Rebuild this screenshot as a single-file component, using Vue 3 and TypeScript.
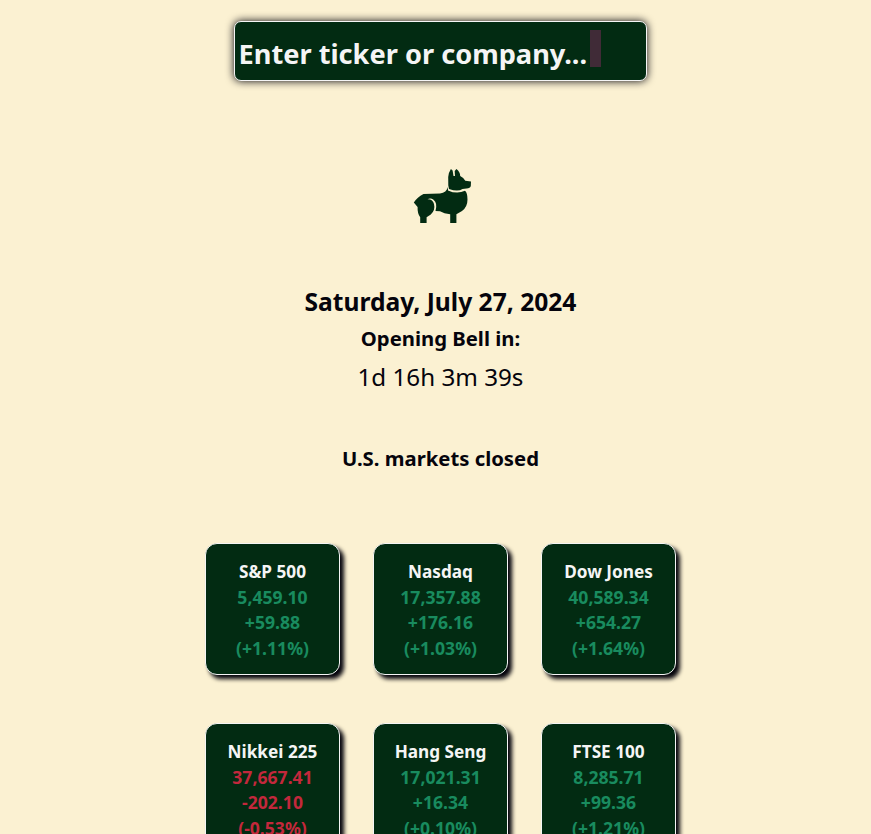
<script setup lang="ts">
interface MarketIndex {
  name: string
  price: string
  change: string
  percent: string
}

const indices: MarketIndex[] = [
  { name: 'S&P 500', price: '5,459.10', change: '+59.88', percent: '(+1.11%)' },
  { name: 'Nasdaq', price: '17,357.88', change: '+176.16', percent: '(+1.03%)' },
  { name: 'Dow Jones', price: '40,589.34', change: '+654.27', percent: '(+1.64%)' },
  { name: 'Nikkei 225', price: '37,667.41', change: '-202.10', percent: '(-0.53%)' },
  { name: 'Hang Seng', price: '17,021.31', change: '+16.34', percent: '(+0.10%)' },
  { name: 'FTSE 100', price: '8,285.71', change: '+99.36', percent: '(+1.21%)' },
]
</script>

<template>
  <main class="page">
    <div class="search">
      <span class="prompt">Enter ticker or company...</span><span class="caret"></span>
    </div>

    <svg class="logo" viewBox="0 0 60 58" aria-hidden="true">
      <path d="M35.3 17.5 L35.2 9 Q35.8 4 37.9 1 L39.6 2.5 L40.5 8 L42 8 L41.7 3 L43.4 1 Q47.2 4 47.2 8 Q50.6 9.4 52.3 12.8 L58 13.4 L57.8 18 Q57.3 20.4 53.5 20.6 L49.5 21 Q45 24 36 21 Z" />
      <path d="M35 19 L35 22.4 Q44 26.6 52 22.8 Q54.5 25 54.5 31.5 Q54.5 39 49 43 L43.4 46.3 L43.4 55 L37.2 55 L37.2 46.3 Q31 45.6 27 43.2 L22.5 43 Q24.8 35 20.5 31.7 Q17.6 29.7 14.5 31.3 Q19.8 31 21 36 Q22.5 42 17.8 46.5 L13.6 49.3 L13.6 55 L7.2 55 L7.2 49.3 Q4.3 45.5 4.6 39 L0.8 34.5 Q4 29.5 10.5 26 L27 25.6 Q33.6 24.5 35 19 Z" />
    </svg>

    <section class="status">
      <h1 class="date">Saturday, July 27, 2024</h1>
      <h2 class="label">Opening Bell in:</h2>
      <p class="countdown">1d 16h 3m 39s</p>
      <h2 class="market">U.S. markets closed</h2>
    </section>

    <section class="grid">
      <article
        v-for="index in indices"
        :key="index.name"
        class="card"
        :class="{ down: index.change.startsWith('-') }"
      >
        <h3>{{ index.name }}</h3>
        <p>{{ index.price }}</p>
        <p>{{ index.change }}</p>
        <p>{{ index.percent }}</p>
      </article>
    </section>
  </main>
</template>

<style>
body {
  background: #fbf1d2;
  overflow: hidden;
}
</style>

<style scoped>
.page {
  box-sizing: border-box;
  height: 834px;
  overflow: hidden;
  padding: 21px 0 0 10px;
  display: flex;
  flex-direction: column;
  align-items: center;
  background: #fbf1d2;
  color: #05040c;
  font-family: "Noto Sans", sans-serif;
}
h1, h2, h3, p {
  margin: 0;
}
.search {
  box-sizing: border-box;
  flex: none;
  width: 413px;
  height: 60px;
  padding: 8px 0 0 3.5px;
  display: flex;
  border: 1px solid #f5f5f5;
  border-radius: 7px;
  background: #022b12;
  box-shadow: 0 0 8px #05040c;
  color: #f5f5f5;
  font-size: 27.2px;
  font-weight: 700;
  line-height: 50px;
  white-space: nowrap;
}
.prompt {
  margin-top: -1px;
  width: 351.5px;
}
.caret {
  width: 11px;
  height: 37px;
  background: #402b37;
}
.logo {
  flex: none;
  width: 60px;
  height: 58px;
  margin-top: 87px;
  margin-left: 4px;
  fill: #022b12;
}
.status {
  flex: none;
  display: flex;
  flex-direction: column;
  align-items: center;
  margin-top: 57px;
  height: 260px;
}
.date {
  font-size: 24.6px;
  font-weight: 700;
  line-height: 37px;
}
.label,
.market {
  font-size: 20.3px;
  font-weight: 700;
  line-height: 36px;
}
.countdown {
  font-size: 24.2px;
  line-height: 42px;
}
.market {
  margin-top: 42px;
}
.grid {
  flex: none;
  display: grid;
  grid-template-columns: repeat(3, 135px);
  gap: 48px 33px;
}
.card {
  box-sizing: border-box;
  height: 132px;
  padding-top: 15px;
  border: 1px solid #f5f5f5;
  border-radius: 12px;
  background: #022b12;
  box-shadow: 4px 4px 4px #05040c;
  color: #198b5f;
  text-align: center;
  font-size: 17.6px;
  font-weight: 700;
  line-height: 25.5px;
}
.card h3 {
  color: #f5f5f5;
  font-size: 17.2px;
  font-weight: 700;
  line-height: 25.5px;
}
.card.down p {
  color: #c3283c;
}
</style>
